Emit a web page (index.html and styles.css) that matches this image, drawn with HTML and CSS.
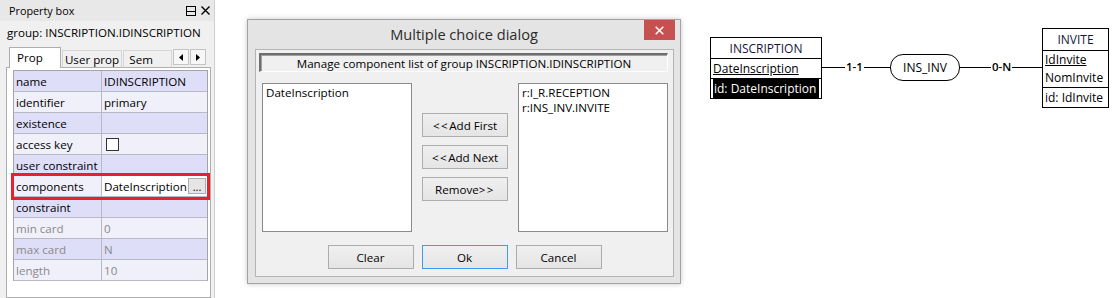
FILE: index.html
```html
<!DOCTYPE html>
<html>
<head>
<meta charset="utf-8">
<link rel="stylesheet" href="styles.css">
</head>
<body>
<div class="screen">
  <section class="panel">
    <header class="panel-title">
      <span>Property box</span>
      <span class="panel-icons">
        <svg width="10" height="10" viewBox="0 0 10 10"><rect x="0.5" y="0.5" width="9" height="9" fill="none" stroke="#000"/><line x1="0" y1="5.5" x2="10" y2="5.5" stroke="#000"/></svg>
        <svg width="9" height="9" viewBox="0 0 9 9"><path d="M0.5 0.5 L8.5 8.5 M8.5 0.5 L0.5 8.5" stroke="#000" stroke-width="1.4"/></svg>
      </span>
    </header>
    <div class="group-label">group: INSCRIPTION.IDINSCRIPTION</div>
    <div class="tabs">
      <div class="tab active">Prop</div>
      <div class="tab">User prop</div>
      <div class="tab">Sem</div>
      <div class="tab-arrows">
        <span class="arrow"><svg width="4" height="7" viewBox="0 0 4 7"><path d="M4 0 L0 3.5 L4 7 Z" fill="#000"/></svg></span>
        <span class="arrow"><svg width="4" height="7" viewBox="0 0 4 7"><path d="M0 0 L4 3.5 L0 7 Z" fill="#000"/></svg></span>
      </div>
    </div>
    <div class="tabpage">
      <div class="ptable">
        <div class="prow alt"><div class="pcell key">name</div><div class="pcell">IDINSCRIPTION</div></div>
        <div class="prow"><div class="pcell key">identifier</div><div class="pcell">primary</div></div>
        <div class="prow alt"><div class="pcell key">existence</div><div class="pcell"></div></div>
        <div class="prow"><div class="pcell key">access key</div><div class="pcell"><span class="checkbox"></span></div></div>
        <div class="prow alt"><div class="pcell key">user constraint</div><div class="pcell"></div></div>
        <div class="prow editing"><div class="pcell key">components</div><div class="pcell edit-cell"><span>DateInscription</span><span class="dots">...</span></div></div>
        <div class="prow alt"><div class="pcell key">constraint</div><div class="pcell"></div></div>
        <div class="prow disabled"><div class="pcell key">min card</div><div class="pcell">0</div></div>
        <div class="prow alt disabled"><div class="pcell key">max card</div><div class="pcell">N</div></div>
        <div class="prow disabled"><div class="pcell key">length</div><div class="pcell">10</div></div>
      </div>
    </div>
  </section>

  <section class="dialog">
    <header class="dlg-titlebar">
      <span></span>
      <span class="dlg-title">Multiple choice dialog</span>
      <span class="dlg-close"><svg width="9" height="9" viewBox="0 0 9 9"><path d="M0.7 0.7 L8.3 8.3 M8.3 0.7 L0.7 8.3" stroke="#fff" stroke-width="1.5"/></svg></span>
    </header>
    <div class="client">
      <div class="banner">Manage component list of group INSCRIPTION.IDINSCRIPTION</div>
      <div class="lists-row">
        <div class="listbox"><div class="item">DateInscription</div></div>
        <div class="mid-buttons">
          <div class="btn"><span class="ang">&lt;&lt;</span>Add First</div>
          <div class="btn"><span class="ang">&lt;&lt;</span>Add Next</div>
          <div class="btn">Remove<span class="ang">&gt;&gt;</span></div>
        </div>
        <div class="listbox"><div class="item">r:I_R.RECEPTION</div><div class="item">r:INS_INV.INVITE</div></div>
      </div>
      <div class="bottom-buttons">
        <div class="btn">Clear</div>
        <div class="btn default">Ok</div>
        <div class="btn">Cancel</div>
      </div>
    </div>
  </section>

  <section class="diagram">
    <div class="link"></div>
    <span class="card card-left">1-1</span>
    <span class="card card-right">0-N</span>
    <div class="entity ent-inscription">
      <div class="ent-head">INSCRIPTION</div>
      <div class="ent-attrs"><div class="attr uline">DateInscription</div></div>
      <div class="ent-ids"><span class="id-sel">id: DateInscription</span></div>
    </div>
    <div class="rel">INS_INV</div>
    <div class="entity ent-invite">
      <div class="ent-head">INVITE</div>
      <div class="ent-attrs"><div class="attr uline">IdInvite</div><div class="attr">NomInvite</div></div>
      <div class="ent-ids"><span class="id-plain">id: IdInvite</span></div>
    </div>
  </section>
</div>
</body>
</html>
```

FILE: styles.css
```css
* { box-sizing: border-box; }
html, body { margin: 0; padding: 0; }
body {
  width: 1119px;
  height: 298px;
  overflow: hidden;
  background: #fff;
  font-family: "Open Sans", "Noto Sans", sans-serif;
  font-size: 11px;
  color: #000;
}
.screen { display: flex; align-items: flex-start; height: 298px; }

/* ---------- property panel ---------- */
.panel {
  width: 215px;
  height: 298px;
  flex: none;
  background: #f0f0f0;
  border-right: 1px solid #cfcfcf;
  display: flex;
  flex-direction: column;
}
.panel-title {
  height: 21px;
  flex: none;
  display: flex;
  align-items: center;
  justify-content: space-between;
  padding: 0 4px 0 9px;
  background: #e8e8e8;
  font-size: 10.8px;
}
.panel-icons { display: flex; gap: 5px; align-items: center; }
.group-label {
  height: 23px;
  flex: none;
  display: flex;
  align-items: center;
  padding-left: 7px;
  font-size: 11.6px;
}
.tabs {
  height: 24px;
  flex: none;
  display: flex;
  align-items: flex-end;
  padding-left: 9px;
  margin-bottom: -1px;
  position: relative;
  z-index: 1;
}
.tab {
  height: 18px;
  padding: 0;
  display: flex;
  align-items: center;
  justify-content: center;
  white-space: nowrap;
  background: #f0f0f0;
  border: 1px solid #d6d6d6;
  border-bottom-color: #adadad;
  margin-right: 1px;
  font-size: 11.6px;
}
.tab.active {
  height: 21px;
  width: 52px;
  justify-content: flex-start;
  padding-left: 7px;
  padding-bottom: 2px;
  background: #fff;
  border-color: #adadad;
  border-bottom: none;
}
.tab:nth-child(2) { width: 61px; }
.tab:nth-child(3) { width: 49px; justify-content: flex-start; padding-left: 5px; }
.tab-arrows {
  margin-left: auto;
  margin-right: 8px;
  align-self: flex-start;
  margin-top: 5px;
  display: flex;
  gap: 1px;
}
.arrow {
  width: 16px;
  height: 16px;
  border: 1px solid #c4c4c4;
  background: #f7f7f7;
  display: flex;
  align-items: center;
  justify-content: center;
}
.tabpage {
  margin-left: 6px;
  width: 205px;
  flex: 1;
  background: #fff;
  border: 1px solid #adadad;
  padding: 2px 2px 0 6px;
}
.ptable { width: 195px; border: 1px solid #a5a5a5; border-bottom: none; }
.prow {
  display: grid;
  grid-template-columns: 88px 1fr;
  height: 21px;
  border-bottom: 1px solid #b9b9c4;
  background: #f0f0fb;
}
.prow.alt { background: #dedef8; }
.prow.disabled { color: #8a8a8a; }
.pcell {
  display: flex;
  align-items: center;
  padding-left: 2px;
  white-space: nowrap;
  overflow: hidden;
  font-size: 11.6px;
}
.pcell.key { border-right: 1px solid #b9b9c4; }
.prow.editing {
  outline: 3px solid #e5222b;
  position: relative;
  z-index: 1;
}
.edit-cell { background: #fff; justify-content: space-between; padding-right: 1px; }
.dots {
  width: 18px;
  height: 16px;
  flex: none;
  border: 1px solid #adadad;
  background: #e5e5e5;
  display: flex;
  justify-content: center;
  align-items: flex-end;
  line-height: 12px;
  font-size: 11px;
}
.checkbox {
  width: 13px;
  height: 13px;
  margin-left: 2px;
  border: 1px solid #333;
  background: #fff;
}

/* ---------- dialog ---------- */
.dialog {
  flex: none;
  margin-left: 32px;
  margin-top: 19px;
  width: 434px;
  height: 265px;
  background: #e4e4e4;
  border: 1px solid #a3a3a3;
  box-shadow: 0 0 5px rgba(0, 0, 0, 0.22);
  display: flex;
  flex-direction: column;
}
.dlg-titlebar {
  height: 29px;
  flex: none;
  display: grid;
  grid-template-columns: 1fr auto 1fr;
  align-items: start;
}
.dlg-title {
  padding-top: 4px;
  font-size: 14.6px;
  color: #2b2b2b;
}
.dlg-close {
  justify-self: end;
  margin-right: 5px;
  width: 31px;
  height: 20px;
  background: #c75050;
  display: flex;
  align-items: center;
  justify-content: center;
}
.client {
  flex: 1;
  margin: 0 6px 6px 7px;
  background: #f0f0f0;
  border: 1px solid #b4b4b4;
  display: flex;
  flex-direction: column;
  padding: 3px 5px 0 3px;
}
.banner {
  height: 19px;
  border-top: 2px solid #6e6e6e;
  border-left: 2px solid #6e6e6e;
  border-bottom: 1px solid #fdfdfd;
  border-right: 1px solid #fdfdfd;
  display: flex;
  align-items: center;
  justify-content: center;
  font-size: 11.6px;
  background: #f0f0f0;
  box-shadow: inset 1px 1px 0 #a0a0a0;
}
.lists-row {
  margin-top: 11px;
  padding-left: 3px;
  display: flex;
  gap: 10px;
}
.listbox {
  width: 150px;
  height: 149px;
  background: #fff;
  border: 1px solid #8a8a8e;
  padding: 1px 3px;
}
.item { font-size: 11.6px; line-height: 15px; white-space: nowrap; }
.mid-buttons {
  width: 86px;
  padding-top: 30px;
  display: flex;
  flex-direction: column;
  gap: 8px;
}
.btn {
  height: 24px;
  width: 86px;
  display: flex;
  align-items: center;
  justify-content: center;
  white-space: pre;
  background: linear-gradient(#f0f0f0, #e5e5e5);
  border: 1px solid #acacac;
  font-size: 11.6px;
}
.ang { letter-spacing: 1.5px; }
.btn.default { border-color: #3d9bff; }
.bottom-buttons {
  margin-top: 13px;
  display: flex;
  justify-content: center;
  gap: 8px;
  padding-left: 2px;
}

/* ---------- diagram ---------- */
.diagram {
  flex: 1;
  margin-left: 19px;
  height: 298px;
  position: relative;
  font-size: 12px;
}
.link {
  position: absolute;
  left: 121px;
  top: 67px;
  width: 221px;
  height: 1px;
  background: #000;
}
.card {
  position: absolute;
  top: 59px;
  background: #fff;
  padding: 0 1px;
  line-height: 16px;
  color: #000;
  font-weight: 600;
  font-size: 11.5px;
}
.card-left { left: 145px; }
.card-right { left: 291px; }
.entity {
  position: absolute;
  border: 1px solid #000;
  background: #fff;
  display: flex;
  flex-direction: column;
}
.ent-inscription { left: 10px; top: 37px; width: 112px; }
.ent-invite { left: 342px; top: 28px; width: 67px; }
.ent-head {
  height: 21px;
  border-bottom: 1px solid #000;
  display: flex;
  align-items: center;
  justify-content: center;
  color: #14143c;
}
.ent-invite .ent-head { height: 22px; }
.ent-attrs { border-bottom: 1px solid #000; padding: 0 2px; }
.attr { height: 18px; line-height: 18px; white-space: nowrap; }
.uline { text-decoration: underline; }
.ent-inscription .attr { height: 19px; line-height: 19px; }
.ent-ids { height: 19px; display: flex; align-items: stretch; padding: 0 2px; }
.id-sel {
  background: #000;
  color: #fff;
  padding: 0 1px;
  display: flex;
  align-items: center;
  width: 106px;
  white-space: nowrap;
}
.id-plain { display: flex; align-items: center; white-space: nowrap; }
.rel {
  position: absolute;
  left: 190px;
  top: 54px;
  width: 70px;
  height: 27px;
  border: 1px solid #000;
  border-radius: 13px;
  background: #fff;
  display: flex;
  align-items: center;
  justify-content: center;
}
```
